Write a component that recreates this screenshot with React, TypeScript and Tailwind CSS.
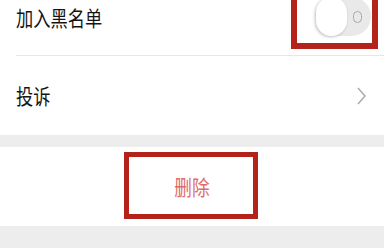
import React from "react";

export default function App() {
  return (
    <div
      className="relative w-[384px] h-[248px] overflow-hidden bg-[#ededed]"
      style={{ fontFamily: '"Noto Sans CJK SC", "Noto Sans", sans-serif' }}
    >
      {/* group 1 */}
      <div className="bg-white">
        <div className="h-[55px] pl-4 pr-[13px] flex justify-between items-start">
          <div className="h-[34px] flex items-center">
            <span className="text-[21px] leading-none text-[#141414] scale-x-[0.82] origin-left inline-block">
              加入黑名单
            </span>
          </div>
          {/* toggle */}
          <div className="mt-[-3px] w-[55px] h-[39px] rounded-full bg-[#e9e9e9] flex items-center justify-between pr-[9px]">
            <div className="w-[31px] h-[39px] rounded-full bg-white shadow-[-1px_1px_3px_rgba(0,0,0,0.25)]" />
            <div className="w-[9px] h-[12px] rounded-full border-[1.5px] border-[#a9a9a9]" />
          </div>
        </div>
        <div className="ml-4 h-px bg-[#e6e6e6]" />
        <div className="h-[79px] pl-4 pr-[18px] flex items-center justify-between">
          <span className="text-[21px] leading-none text-[#141414] scale-x-[0.82] origin-left inline-block">
            投诉
          </span>
          <svg width="9" height="18" viewBox="0 0 9 18" fill="none">
            <path d="M1 1 L8 9 L1 17" stroke="#a8a8a8" strokeWidth="1.4" />
          </svg>
        </div>
      </div>
      {/* gap */}
      <div className="h-[12px]" />
      {/* delete */}
      <div className="h-[79px] bg-white flex items-center justify-center">
        <span className="text-[21px] leading-none text-[#e06a6a] scale-x-[0.84] inline-block">
          删除
        </span>
      </div>

      {/* annotation boxes */}
      <div className="absolute left-[291px] top-[-10px] w-[87px] h-[59px] border-[6px] border-[#b3221b]" />
      <div className="absolute left-[124px] top-[152px] w-[134px] h-[67px] border-[5px] border-[#b3221b]" />
    </div>
  );
}
